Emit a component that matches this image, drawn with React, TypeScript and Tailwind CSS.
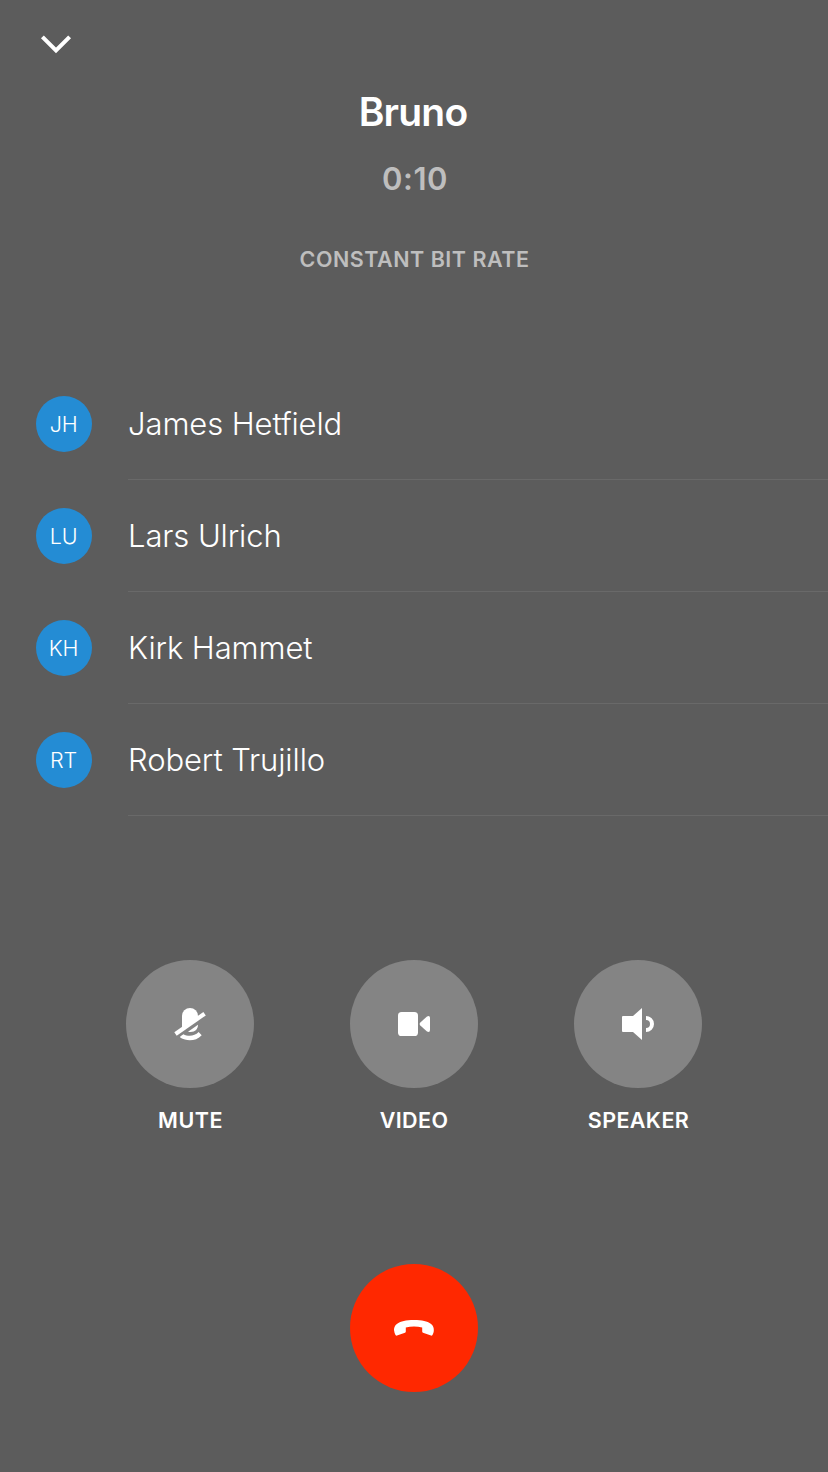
import type { ReactNode } from "react";

type Participant = { initials: string; name: string };

const participants: Participant[] = [
  { initials: "JH", name: "James Hetfield" },
  { initials: "LU", name: "Lars Ulrich" },
  { initials: "KH", name: "Kirk Hammet" },
  { initials: "RT", name: "Robert Trujillo" },
];

function Icon({ children }: { children: ReactNode }) {
  return (
    <svg width="60" height="60" viewBox="0 0 60 60" fill="currentColor" aria-hidden="true">
      {children}
    </svg>
  );
}

function MuteIcon() {
  return (
    <Icon>
      <path d="M22 36V22a8 8 0 0 1 16 0V24.5Z" />
      <path d="M14.3 38.3 43.4 18 45.8 21.4 16.7 41.7Z" />
      <path d="M28 37.8 38 30.8C38 35.5 34.5 39 28 37.8Z" />
      <path d="M23.4 40.2C28 42.8 34.5 42.4 38.6 38.1L41.7 41.2C36 47.4 27 47.6 20.4 43.8L20.2 42.5Z" />
    </Icon>
  );
}

function VideoIcon() {
  return (
    <Icon>
      <rect x="14" y="18" width="20" height="24" rx="3.6" />
      <path d="M36.3 28.6 43 22.4Q46 21 46 24V36Q46 39 43 37.6L36.3 31.4Q35 30 36.3 28.6Z" />
    </Icon>
  );
}

function SpeakerIcon() {
  return (
    <Icon>
      <path d="M14 23a1 1 0 0 1 1-1H25L34 14V46L25 38H15a1 1 0 0 1-1-1Z" />
      <path d="M38 22a8 8 0 0 1 0 16V34a4 4 0 0 0 0-8Z" />
    </Icon>
  );
}

function CallAction({ label, tracking, children }: { label: string; tracking: string; children: ReactNode }) {
  return (
    <div className="flex w-32 flex-col items-center">
      <button aria-label={label} className="flex size-32 items-center justify-center rounded-full bg-[#848484]">
        {children}
      </button>
      <span className={`mt-4 text-[21.5px] leading-8 font-semibold whitespace-nowrap ${tracking}`}>{label}</span>
    </div>
  );
}

export default function App() {
  return (
    <main className="flex h-[1472px] w-[828px] flex-col bg-[#5c5c5c] font-['Inter',sans-serif] text-white">
      <header className="flex h-[88px] shrink-0 items-start pt-7 pl-9">
        <button aria-label="Minimize call">
          <svg width="40" height="32" viewBox="0 0 40 32" fill="none" stroke="currentColor" strokeWidth="4" aria-hidden="true">
            <path d="M6.4 8.8 20 22.4 33.6 8.8" />
          </svg>
        </button>
      </header>
      <section className="flex h-[280px] shrink-0 flex-col items-center">
        <h1 className="pr-0.5 text-[39px] leading-[48px] font-semibold tracking-[-0.8px]">Bruno</h1>
        <p className="mt-[23px] pl-0.5 text-[31px] leading-10 font-semibold tracking-[0.5px] text-[#bebebe]">0:10</p>
        <p className="mt-11 pl-px text-[21.5px] leading-8 font-semibold tracking-[0.5px] text-[#bebebe]">CONSTANT BIT RATE</p>
      </section>
      <ul className="flex shrink-0 flex-col">
        {participants.map((p) => (
          <li key={p.initials} className="flex h-28 items-center gap-9 pl-9">
            <div className="flex size-14 items-center justify-center rounded-full bg-[#248cd4]">
              <span className="pr-px text-[21.5px] leading-6 font-light tracking-[-0.2px]">{p.initials}</span>
            </div>
            <div className="flex h-full flex-1 items-center border-b border-[#696969] pt-px">
              <span className="text-[31px] leading-10 font-light tracking-[-0.1px]">{p.name}</span>
            </div>
          </li>
        ))}
      </ul>
      <section className="mt-36 flex shrink-0 justify-center gap-24">
        <CallAction label="MUTE" tracking="tracking-[0.5px] pl-px"><MuteIcon /></CallAction>
        <CallAction label="VIDEO" tracking="tracking-[0.4px]"><VideoIcon /></CallAction>
        <CallAction label="SPEAKER" tracking="tracking-[0.4px] pl-px"><SpeakerIcon /></CallAction>
      </section>
      <footer className="mt-32 flex justify-center">
        <button aria-label="End call" className="flex size-32 items-center justify-center rounded-full bg-[#ff2800]">
          <Icon>
            <path d="M10.2 33C9.4 27.4 13.5 22 30 22S50.6 27.4 49.8 33C49.5 35 48.9 36.6 48.3 37.2Q47.8 37.9 47 37.5L39 34.8Q38.2 34.5 38.2 33.5V29.5Q30 27.3 21.8 29.5V33.5Q21.8 34.5 21 34.8L13 37.5Q12.2 37.9 11.7 37.2C11.1 36.6 10.5 35 10.2 33Z" />
          </Icon>
        </button>
      </footer>
    </main>
  );
}
